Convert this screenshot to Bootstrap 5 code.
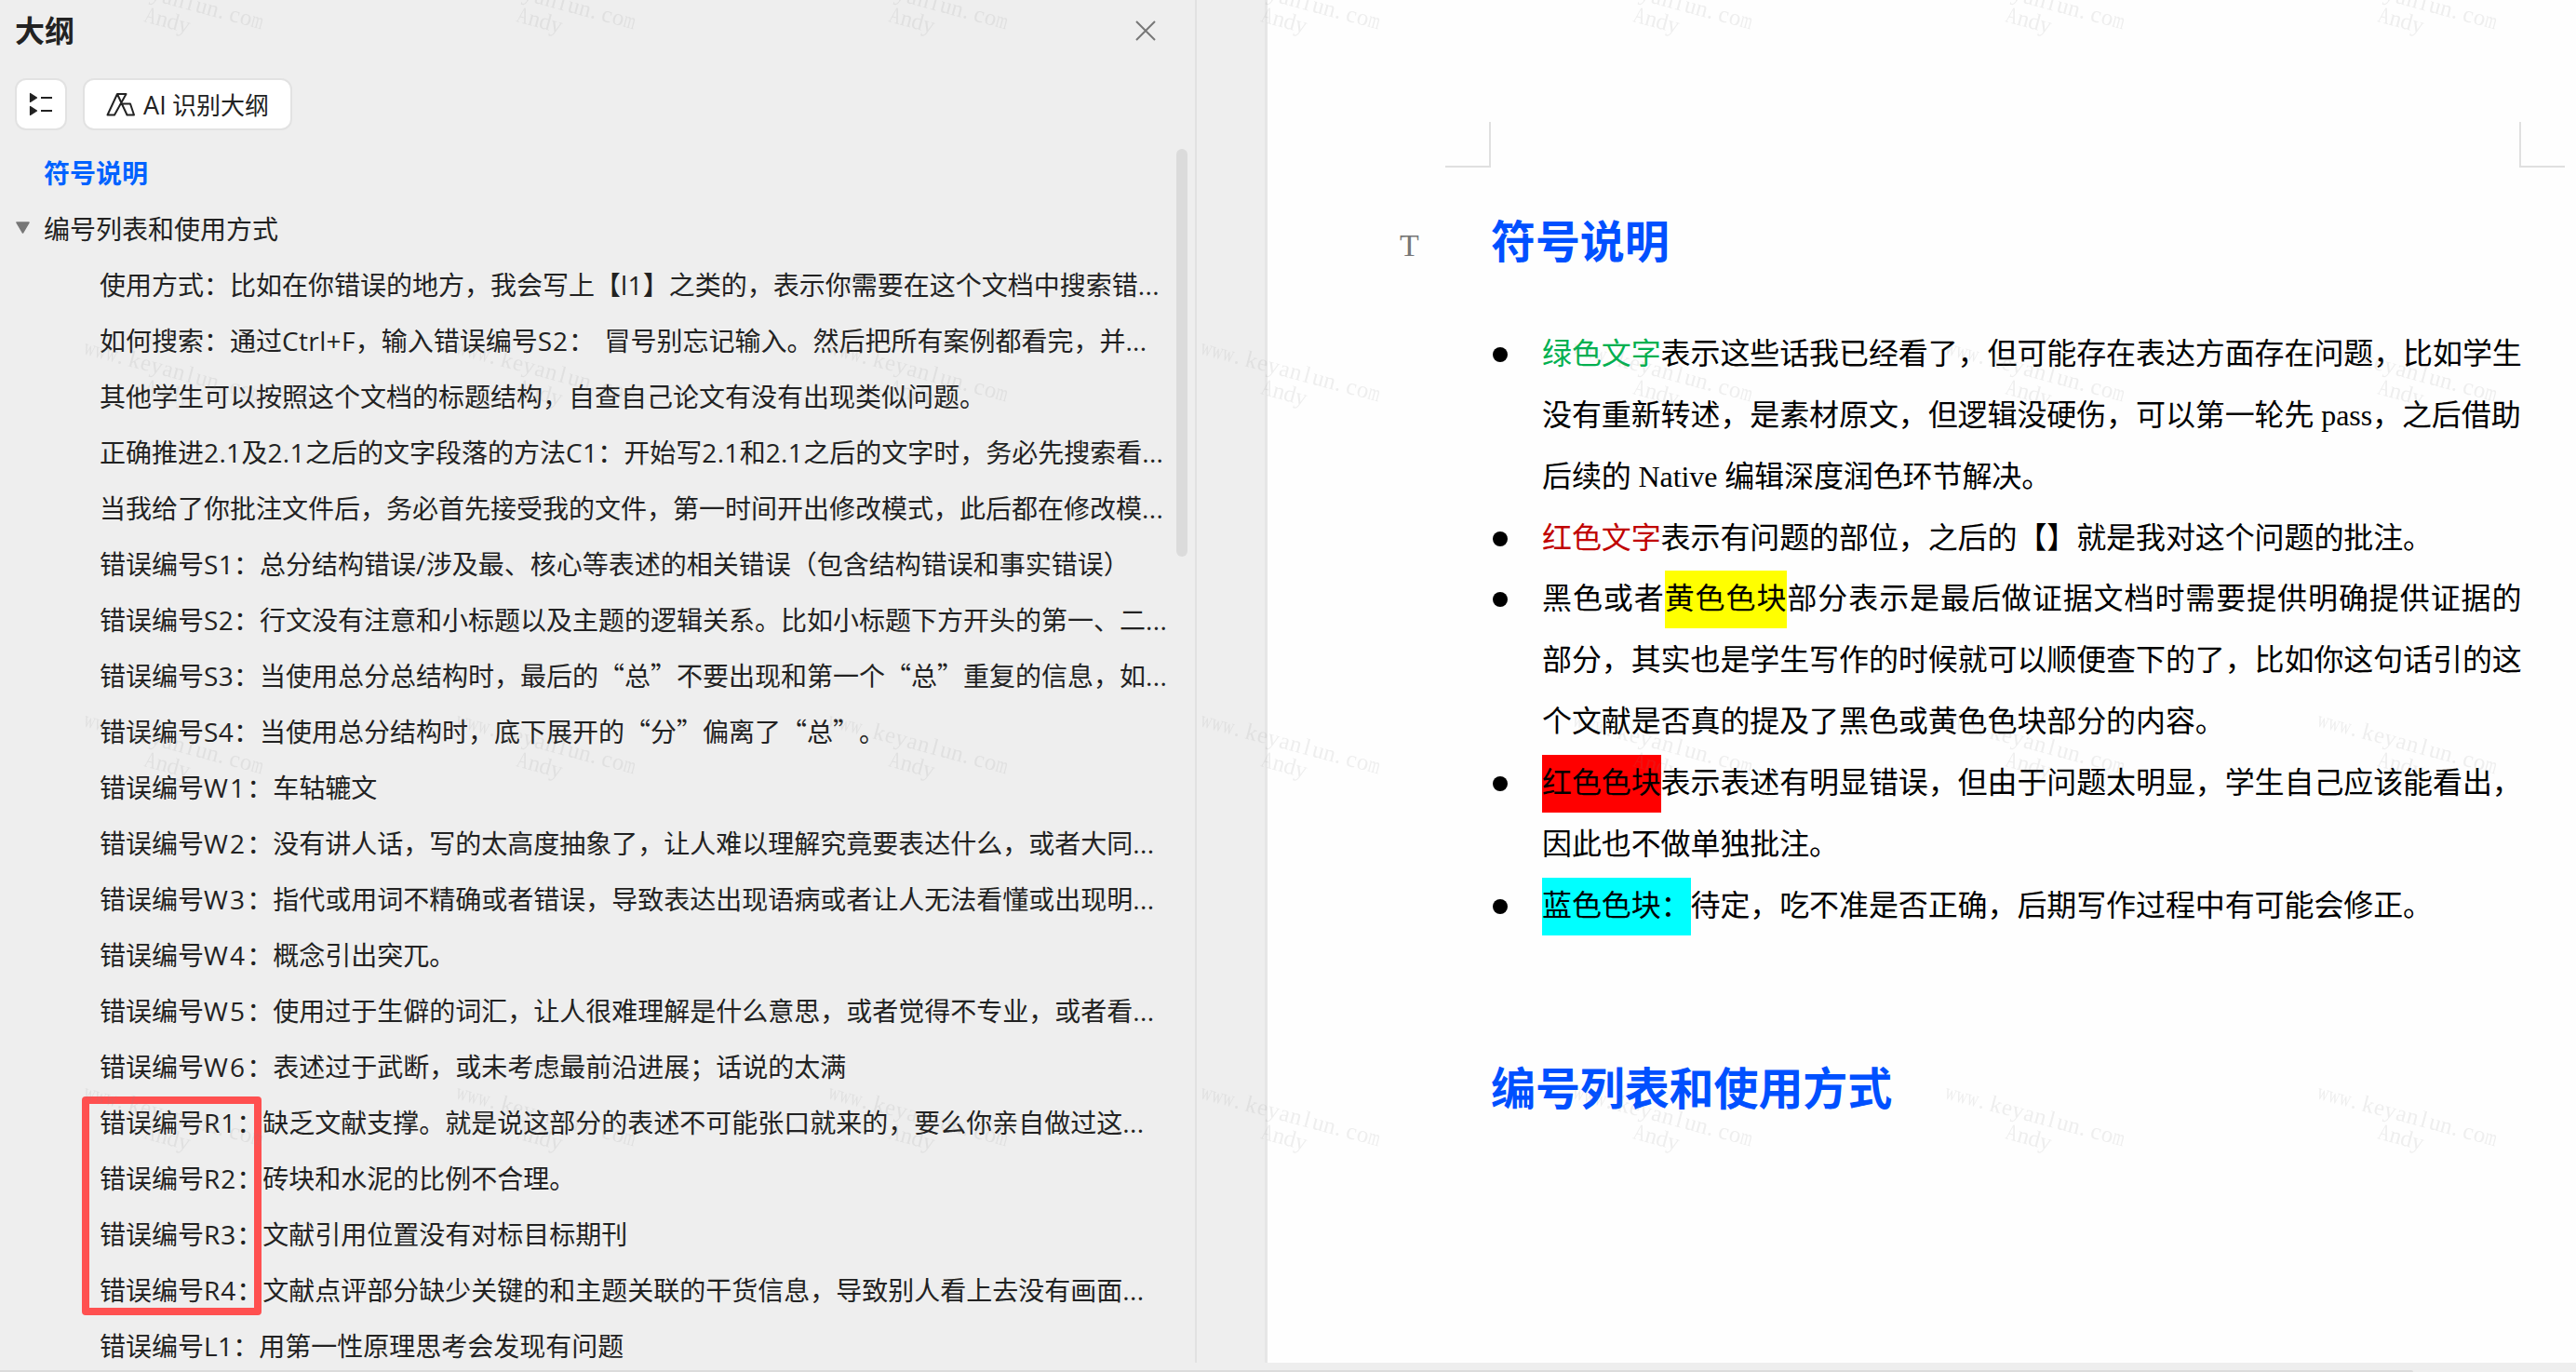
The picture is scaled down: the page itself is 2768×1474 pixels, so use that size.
<!DOCTYPE html>
<html lang="zh-CN">
<head>
<meta charset="utf-8">
<title>大纲</title>
<link href="https://cdn.jsdelivr.net/npm/bootstrap@5.3.0/dist/css/bootstrap.min.css" rel="stylesheet">
<style>
  body { width: 2768px; height: 1474px; background: #eee; color: #222; font-family: "Noto Sans CJK SC", sans-serif; text-spacing-trim: space-all; font-kerning: none; }
  .workspace { height: 1464px; }
  .outline-pane { width: 1286px; border-right: 2px solid #e1e1e1; }
  .pane-head { height: 66px; padding: 0 42px 0 16px; }
  .pane-title { font-size: 32px; font-weight: 700; line-height: 62px; height: 66px; color: #222; }
  .pane-tools { height: 89px; padding: 18px 0 0 16px; gap: 17px; }
  .tool-btn { height: 56px; background: #fff; border: 2px solid #e2e2e2; border-radius: 12px; font-size: 26px; line-height: 1; color: #222; }
  .tool-btn.sq { width: 56px; }
  .tool-btn.wide { width: 225px; gap: 8px; }
  .tool-btn .en { font-size: 27px; letter-spacing: .4px; }
  .tree-row { height: 60px; font-size: 28px; line-height: 60px; white-space: pre; padding-left: 107px; word-spacing: 4px; }
  .tree-row.top { padding-left: 47px; }
  .tree-row.current { color: #0062ff; font-weight: 700; }
  .twisty { width: 47px; padding-left: 17px; }
  .en { font-family: "Open Sans", sans-serif; font-size: 28px; letter-spacing: .35px; line-height: 1; }
  .en.wd { letter-spacing: 2.2px; }
  .en.md { letter-spacing: 1px; }
  .scroll-thumb { right: 8px; top: 160px; width: 12px; height: 438px; border-radius: 6px; background: #dbdbdb; }
  .marker { left: 88px; top: 1178px; width: 193px; height: 235px; border: 8px solid #ff5050; border-radius: 4px; }
  .gutter { width: 76px; border-right: 3px solid #e6e6e6; }
  .paper { background: #fefefe; color: #000; padding: 131px 0 0 191px; }
  .crop-row { height: 49px; padding-right: 12px; }
  .crop { width: 49px; height: 49px; border-bottom: 2px solid #e0e0e0; }
  .crop.l { border-right: 2px solid #e0e0e0; }
  .crop.r { border-left: 2px solid #e0e0e0; }
  .doc-body { padding-left: 49px; }
  .doc-head { padding-top: 40px; }
  .doc-title { font-size: 48px; font-weight: 700; line-height: 72px; color: #0050ff; margin: 0; letter-spacing: -.1px; }
  .doc-title.next { margin-top: 127px; }
  .style-tag { left: -98px; top: 62px; font: 400 34px/44px "Liberation Serif", serif; color: #777; }
  .doc-list { margin: 53px 0 0; }
  .doc-item { padding-left: 55px; }
  .doc-item::before { content: ""; position: absolute; left: 2px; top: 28px; width: 16px; height: 16px; border-radius: 50%; background: #000; }
  .doc-line { height: 65.85px; line-height: 65.85px; font-size: 32px; letter-spacing: -.1px; white-space: pre; }
  .doc-line.loose { letter-spacing: .92px; }
  .serif { font-family: "Liberation Serif", serif; line-height: 1; }
  .hl { display: inline-block; height: 62px; line-height: 55.85px; vertical-align: top; margin-top: 5px; }
  .green { color: #00b050; }
  .red { color: #c00000; }
  .hl-yellow { background: #ff0; }
  .hl-red { background: #f00; }
  .hl-cyan { background: #0ff; }
  .hbar { width: 2593px; height: 2px; margin-top: 8px; background: #dbdbdb; border-top-right-radius: 3px; }
  .stamp { left: 0; top: 0; pointer-events: none; }
</style>
<script src="https://cdn.jsdelivr.net/npm/bootstrap@5.3.0/dist/js/bootstrap.bundle.min.js"></script>
</head>
<body class="overflow-hidden position-relative">
<div class="workspace d-flex">
  <aside class="outline-pane position-relative flex-shrink-0">
    <div class="pane-head d-flex align-items-center justify-content-between">
      <div class="pane-title">大纲</div>
      <svg width="22" height="22" viewBox="0 0 22 22" fill="none" stroke="#777" stroke-width="2"><path d="M1 1L21 21M21 1L1 21"/></svg>
    </div>
    <div class="pane-tools d-flex">
      <button class="tool-btn sq btn p-0 d-flex align-items-center justify-content-center" aria-label="展开">
        <svg width="26" height="26" viewBox="0 0 26 26" fill="#222"><path d="M1.500 1.500v9l7-4.500zM1.500 15.500v9l7-4.500z" stroke="#222" stroke-width="1.200" stroke-linejoin="round"/><path d="M13 5h12v2H13zM13 19h12v2H13z"/></svg>
      </button>
      <button class="tool-btn wide btn p-0 d-flex align-items-center justify-content-center">
        <svg width="32" height="26" viewBox="0 0 32 26" fill="none" stroke="#222" stroke-width="2" stroke-linejoin="round"><path d="M12 2H21.500L9 24.500H1.500zM12 2L22.500 24.500H30L26 12.500H16.800"/></svg>
        <span><span class="en">AI</span> 识别大纲</span>
      </button>
    </div>
    <div class="tree-row top current">符号说明</div>
    <div class="tree-row top d-flex align-items-center p-0"><span class="twisty d-flex"><svg width="15" height="14" viewBox="0 0 15 14"><path d="M1 1H14L7.500 12z" fill="#777" stroke="#777" stroke-width="1.500" stroke-linejoin="round"/></svg></span>编号列表和使用方式</div>
    <div class="tree-row">使用方式：比如在你错误的地方，我会写上【<span class="en">l1</span>】之类的，表示你需要在这个文档中搜索错<span class="en">...</span></div>
    <div class="tree-row">如何搜索：通过<span class="en">Ctrl+F</span>，输入错误编号<span class="en md">S2</span>： 冒号别忘记输入。然后把所有案例都看完，并<span class="en">...</span></div>
    <div class="tree-row">其他学生可以按照这个文档的标题结构，自查自己论文有没有出现类似问题。</div>
    <div class="tree-row">正确推进<span class="en">2.1</span>及<span class="en">2.1</span>之后的文字段落的方法<span class="en">C1</span>：开始写<span class="en">2.1</span>和<span class="en">2.1</span>之后的文字时，务必先搜索看<span class="en">...</span></div>
    <div class="tree-row">当我给了你批注文件后，务必首先接受我的文件，第一时间开出修改模式，此后都在修改模<span class="en">...</span></div>
    <div class="tree-row">错误编号<span class="en">S1</span>：总分结构错误<span class="en">/</span>涉及最、核心等表述的相关错误（包含结构错误和事实错误）</div>
    <div class="tree-row">错误编号<span class="en">S2</span>：行文没有注意和小标题以及主题的逻辑关系。比如小标题下方开头的第一、二<span class="en">...</span></div>
    <div class="tree-row">错误编号<span class="en">S3</span>：当使用总分总结构时，最后的“总”不要出现和第一个“总”重复的信息，如<span class="en">...</span></div>
    <div class="tree-row">错误编号<span class="en">S4</span>：当使用总分结构时，底下展开的“分”偏离了“总”。</div>
    <div class="tree-row">错误编号<span class="en wd">W1</span>：车轱辘文</div>
    <div class="tree-row">错误编号<span class="en wd">W2</span>：没有讲人话，写的太高度抽象了，让人难以理解究竟要表达什么，或者大同<span class="en">...</span></div>
    <div class="tree-row">错误编号<span class="en wd">W3</span>：指代或用词不精确或者错误，导致表达出现语病或者让人无法看懂或出现明<span class="en">...</span></div>
    <div class="tree-row">错误编号<span class="en wd">W4</span>：概念引出突兀。</div>
    <div class="tree-row">错误编号<span class="en wd">W5</span>：使用过于生僻的词汇，让人很难理解是什么意思，或者觉得不专业，或者看<span class="en">...</span></div>
    <div class="tree-row">错误编号<span class="en wd">W6</span>：表述过于武断，或未考虑最前沿进展；话说的太满</div>
    <div class="tree-row">错误编号<span class="en md">R1</span>：缺乏文献支撑。就是说这部分的表述不可能张口就来的，要么你亲自做过这<span class="en">...</span></div>
    <div class="tree-row">错误编号<span class="en md">R2</span>：砖块和水泥的比例不合理。</div>
    <div class="tree-row">错误编号<span class="en md">R3</span>：文献引用位置没有对标目标期刊</div>
    <div class="tree-row">错误编号<span class="en md">R4</span>：文献点评部分缺少关键的和主题关联的干货信息，导致别人看上去没有画面<span class="en">...</span></div>
    <div class="tree-row">错误编号<span class="en">L1</span>：用第一性原理思考会发现有问题</div>
    <div class="scroll-thumb position-absolute"></div>
    <div class="marker position-absolute"></div>
  </aside>
  <div class="gutter flex-shrink-0"></div>
  <main class="paper flex-grow-1">
    <div class="crop-row d-flex justify-content-between"><span class="crop l"></span><span class="crop r"></span></div>
    <div class="doc-body">
      <div class="doc-head position-relative">
        <span class="style-tag position-absolute">T</span>
        <h1 class="doc-title">符号说明</h1>
      </div>
      <ul class="doc-list list-unstyled">
        <li class="doc-item position-relative">
          <div class="doc-line"><span class="green">绿色文字</span>表示这些话我已经看了，但可能存在表达方面存在问题，比如学生</div>
          <div class="doc-line">没有重新转述，是素材原文，但逻辑没硬伤，可以第一轮先<span class="serif"> pass</span>，之后借助</div>
          <div class="doc-line">后续的<span class="serif"> Native </span>编辑深度润色环节解决。</div>
        </li>
        <li class="doc-item position-relative">
          <div class="doc-line"><span class="red">红色文字</span>表示有问题的部位，之后的【】就是我对这个问题的批注。</div>
        </li>
        <li class="doc-item position-relative">
          <div class="doc-line loose">黑色或者<span class="hl hl-yellow">黄色色块</span>部分表示是最后做证据文档时需要提供明确提供证据的</div>
          <div class="doc-line">部分，其实也是学生写作的时候就可以顺便查下的了，比如你这句话引的这</div>
          <div class="doc-line">个文献是否真的提及了黑色或黄色色块部分的内容。</div>
        </li>
        <li class="doc-item position-relative">
          <div class="doc-line"><span class="hl hl-red">红色色块</span>表示表述有明显错误，但由于问题太明显，学生自己应该能看出，</div>
          <div class="doc-line">因此也不做单独批注。</div>
        </li>
        <li class="doc-item position-relative">
          <div class="doc-line"><span class="hl hl-cyan">蓝色色块：</span>待定，吃不准是否正确，后期写作过程中有可能会修正。</div>
        </li>
      </ul>
      <h1 class="doc-title next">编号列表和使用方式</h1>
    </div>
  </main>
</div>
<div class="hbar"></div>
<svg class="stamp position-absolute" width="2768" height="1474" fill="#808080" fill-opacity=".13" font-family="Liberation Serif, serif" font-size="25">
  <defs>
    <pattern id="wm" x="57" y="340" width="400" height="400" patternUnits="userSpaceOnUse">
      <g transform="translate(31.700 40) rotate(15)">
        <text x="0" y="0" textLength="36.500" lengthAdjust="spacingAndGlyphs">www</text>
        <text y="0" text-anchor="middle" x="41 56 68.500 80.500 93 105.500 118 130.500 143 153 167.500 180">.keyanlun.co</text>
        <text x="186.500" y="0" textLength="12.500" lengthAdjust="spacingAndGlyphs">m</text>
      </g>
      <g transform="translate(97 83) rotate(15)">
        <text x="0" y="0" textLength="12.500" lengthAdjust="spacingAndGlyphs">A</text>
        <text y="0" text-anchor="middle" x="19 31 43.500">ndy</text>
      </g>
    </pattern>
  </defs>
  <rect width="2768" height="1474" fill="url(#wm)" fill-opacity="1"/>
</svg>
</body>
</html>
